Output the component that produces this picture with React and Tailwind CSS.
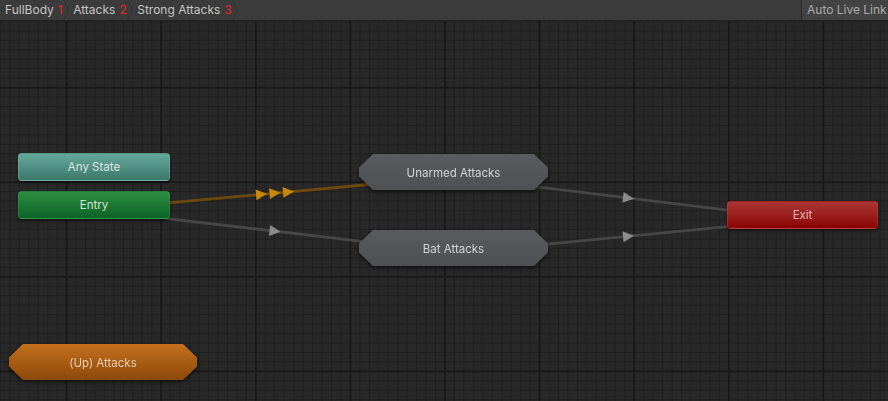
import React from "react";

const W = 888;
const H = 380;
const MAJ = 94.6;
const MIN = 9.46;
const OFF = 66.6;

function Grid() {
  const minorV = [];
  const minorH = [];
  const majorV = [];
  const majorH = [];
  for (let x = OFF - MAJ * 1; x < W; x += MIN) if (x >= 0) minorV.push(x);
  for (let y = OFF - MAJ * 1; y < H; y += MIN) if (y >= 0) minorH.push(y);
  for (let x = OFF - MAJ; x < W; x += MAJ) if (x >= 0) majorV.push(x);
  for (let y = OFF - MAJ; y < H; y += MAJ) if (y >= 0) majorH.push(y);
  return (
    <g>
      {minorV.map((x, i) => (
        <line key={"mv" + i} x1={x} y1={0} x2={x} y2={H} stroke="#212121" strokeWidth="1" />
      ))}
      {minorH.map((y, i) => (
        <line key={"mh" + i} x1={0} y1={y} x2={W} y2={y} stroke="#212121" strokeWidth="1" />
      ))}
      {majorV.map((x, i) => (
        <line key={"Mv" + i} x1={x} y1={0} x2={x} y2={H} stroke="#181818" strokeWidth="1.6" />
      ))}
      {majorH.map((y, i) => (
        <line key={"Mh" + i} x1={0} y1={y} x2={W} y2={y} stroke="#181818" strokeWidth="1.6" />
      ))}
    </g>
  );
}

function Arrow({ x, y, angle, color, s = 1 }) {
  return (
    <polygon
      points={`${-5 * s},${-5.5 * s} ${6 * s},0 ${-5 * s},${5.5 * s}`}
      fill={color}
      transform={`translate(${x} ${y}) rotate(${angle})`}
    />
  );
}

function Transition({ x1, y1, x2, y2, color, arrowColor, arrows }) {
  const ang = (Math.atan2(y2 - y1, x2 - x1) * 180) / Math.PI;
  const slope = (y2 - y1) / (x2 - x1);
  return (
    <g>
      <line x1={x1} y1={y1} x2={x2} y2={y2} stroke={color} strokeWidth="2.8" />
      {arrows.map((ax, i) => (
        <Arrow key={i} x={ax} y={y1 + slope * (ax - x1)} angle={ang} color={arrowColor} />
      ))}
    </g>
  );
}

const hexClip =
  "[clip-path:polygon(14px_0,calc(100%-14px)_0,100%_13.5px,100%_calc(100%-13.5px),calc(100%-14px)_100%,14px_100%,0_calc(100%-13.5px),0_13.5px)]";

export default function App() {
  return (
    <div
      className="w-[888px] h-[401px] overflow-hidden bg-[#282828] flex flex-col text-[12px]"
      style={{ fontFamily: "Inter, 'Noto Sans', sans-serif" }}
    >
      {/* toolbar */}
      <div className="h-[21px] shrink-0 flex items-stretch bg-[#3b3b3b] border-b border-[#232323] text-[#c4c4c4]">
        <div className="flex items-stretch pl-[5px]">
          {[
            ["FullBody", "1"],
            ["Attacks", "2"],
            ["Strong Attacks", "3"],
          ].map(([t, n], i) => (
            <div key={i} className="flex items-center">
              <span className="leading-none">{t}</span>
              <span className="ml-[4px] text-[#e8282b] leading-none">{n}</span>
              <svg width="10" height="20" viewBox="0 0 10 20" className="mr-[0.5px]">
                <polyline points="1,0 6,10 1,20" fill="none" stroke="#2c2c2c" strokeWidth="1" />
                <polyline points="2,0 7,10 2,20" fill="none" stroke="#454545" strokeWidth="0.8" />
              </svg>
            </div>
          ))}
        </div>
        <div className="flex-1" />
        <div className="flex items-center w-[87px] pl-[5px] bg-[#434343] border-l border-[#2a2a2a] text-[#ababab]">
          Auto Live Link
        </div>
      </div>

      {/* graph canvas */}
      <div className="relative flex-1 text-[11.5px]">
        <svg width={W} height={H} className="absolute left-0 top-0">
          <Grid />
          <Transition
            x1={165}
            y1={182.2}
            x2={380}
            y2={162.5}
            color="#6c4a0e"
            arrowColor="#c9870a"
            arrows={[261, 274.5, 288]}
          />
          <Transition
            x1={165}
            y1={197.4}
            x2={375}
            y2={221.8}
            color="#464646"
            arrowColor="#8a8a8a"
            arrows={[274.5]}
          />
          <Transition
            x1={535}
            y1={165.7}
            x2={740}
            y2={190.6}
            color="#464646"
            arrowColor="#8a8a8a"
            arrows={[628]}
          />
          <Transition
            x1={540}
            y1={223.8}
            x2={740}
            y2={204.4}
            color="#464646"
            arrowColor="#8a8a8a"
            arrows={[628]}
          />
        </svg>

        {/* Any State */}
        <div className="absolute left-[18px] top-[132px] w-[152px] h-[28px] pt-[1px] rounded-[4px] bg-gradient-to-b from-[#64a89a] to-[#3e786d] border border-[#7dbcaf]/40 shadow-[0_2px_3px_rgba(0,0,0,0.45)] flex items-center justify-center text-[#d8e6e3]">
          Any State
        </div>

        {/* Entry */}
        <div className="absolute left-[18px] top-[170px] w-[152px] h-[28px] pt-[1px] rounded-[4px] bg-gradient-to-b from-[#2c8d40] to-[#0b6427] border border-[#45a058]/40 shadow-[0_2px_3px_rgba(0,0,0,0.45)] flex items-center justify-center text-[#d0e4d4]">
          Entry
        </div>

        {/* Unarmed Attacks */}
        <div className="absolute left-[359px] top-[133px] w-[189px] h-[36px] drop-shadow-[0_2px_2px_rgba(0,0,0,0.5)]">
          <div
            className={`w-full h-full pt-[3px] ${hexClip} bg-gradient-to-b from-[#595b5f] to-[#4e5054] flex items-center justify-center text-[#d2d2d2]`}
          >
            Unarmed Attacks
          </div>
        </div>

        {/* Bat Attacks */}
        <div className="absolute left-[359px] top-[209px] w-[189px] h-[36px] drop-shadow-[0_2px_2px_rgba(0,0,0,0.5)]">
          <div
            className={`w-full h-full pt-[3px] ${hexClip} bg-gradient-to-b from-[#595b5f] to-[#4e5054] flex items-center justify-center text-[#d2d2d2]`}
          >
            Bat Attacks
          </div>
        </div>

        {/* Exit */}
        <div className="absolute left-[727px] top-[180px] w-[151px] h-[28px] pt-[1px] rounded-[4px] bg-gradient-to-b from-[#ab3434] to-[#890000] border border-[#c04c4c]/40 shadow-[0_2px_3px_rgba(0,0,0,0.45)] flex items-center justify-center text-[#e8b2b2]">
          Exit
        </div>

        {/* (Up) Attacks */}
        <div className="absolute left-[9px] top-[323px] w-[188px] h-[36px] drop-shadow-[0_2px_2px_rgba(0,0,0,0.5)]">
          <div
            className={`w-full h-full pt-[3px] ${hexClip} bg-gradient-to-b from-[#c5711e] to-[#8c4909] flex items-center justify-center text-[#e8cdb5]`}
          >
            (Up) Attacks
          </div>
        </div>
      </div>
    </div>
  );
}
